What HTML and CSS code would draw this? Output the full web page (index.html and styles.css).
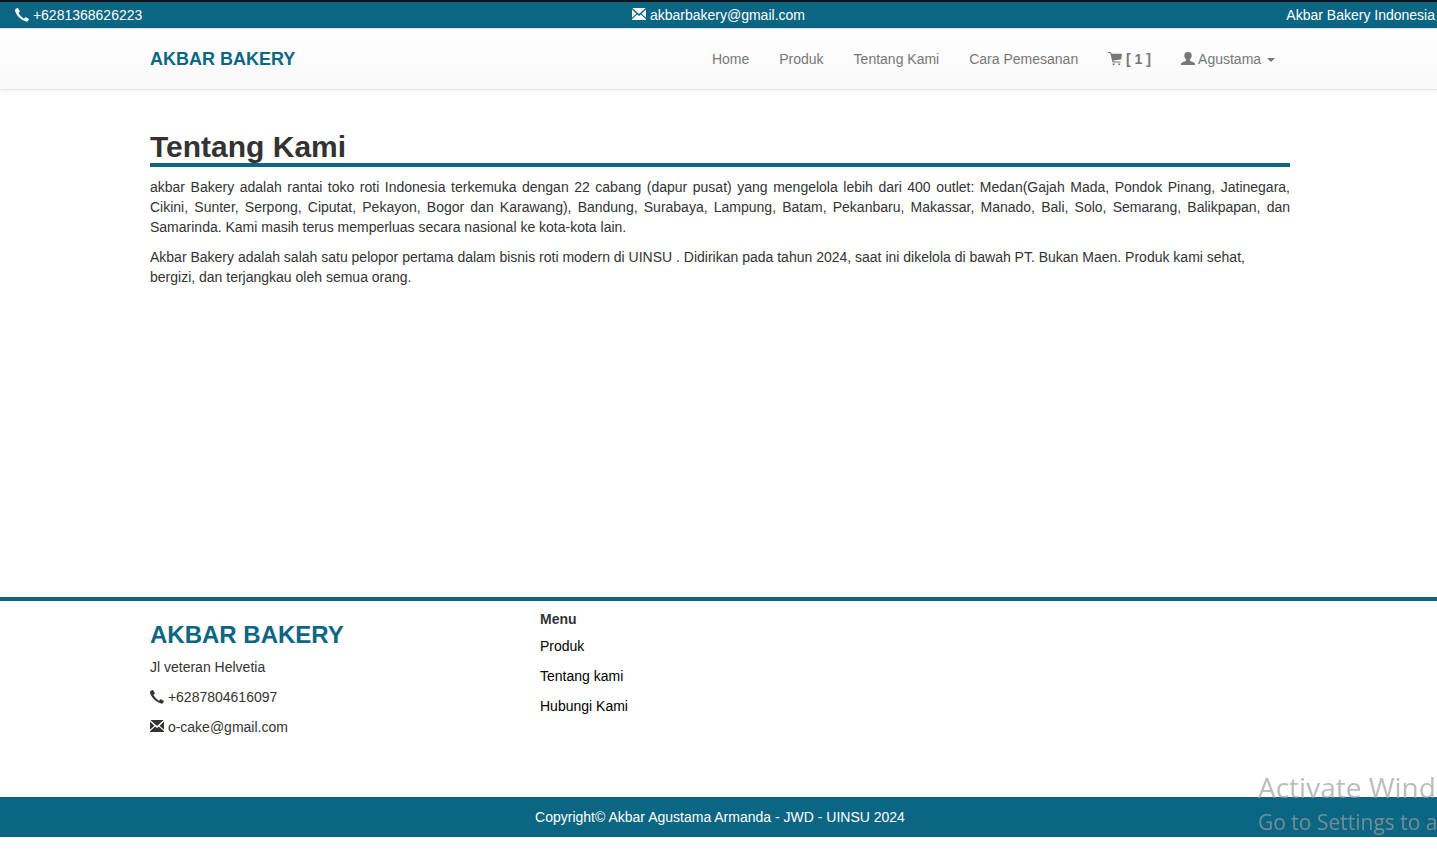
FILE: index.html
```html
<!DOCTYPE html>
<html lang="id">
<head>
<meta charset="utf-8">
<meta name="viewport" content="width=device-width, initial-scale=1">
<title>Akbar Bakery - Tentang Kami</title>
<link rel="stylesheet" href="styles.css">
</head>
<body>
<svg class="sprite" aria-hidden="true">
  <symbol id="phone" viewBox="0 0 14 14"><path d="M0.600 1 2.200 0.100Q2.900 -0.200 3.300 0.400L4.700 3Q5 3.500 4.500 3.900L3.700 4.600Q3.300 5 3.700 5.600Q5.600 8.700 8.500 10.500Q9 10.800 9.300 10.400L10 9.500Q10.400 9.100 10.900 9.300L13.600 10.700Q14.100 11.100 13.800 11.600L12.900 13.100Q12.500 13.700 11.800 13.700Q8.200 13.300 4.200 9.500Q0.200 5.400 0 2.300Q0 1.400 0.600 1Z"/></symbol>
  <symbol id="mail" viewBox="0 0 14 14"><path d="M0.300 0H13.700L7 6ZM0 1.600 4.400 5.700 0 9.700ZM14 1.600V9.700L9.600 5.700ZM5.200 6.500 7 8.100 8.800 6.500 14 11.300V12H0V11.300Z"/></symbol>
  <symbol id="cart" viewBox="0 0 14 14"><path d="M0.400 0H2.400Q2.900 0 3.050 0.400L3.700 1.700H13.500Q14 1.700 13.950 2.200L13.200 7Q13.100 7.500 12.600 7.600L5.300 8.600L5.600 9.600H12.200Q12.700 9.600 12.700 10.100T12.200 10.600H5Q4.600 10.600 4.500 10.200L2.200 1H0.400Q0 1 0 0.500T0.400 0ZM4.600 11.500H6.600V12.300A1 1 0 0 1 4.600 12.300ZM10.200 11.500H12.200V12.300A1 1 0 0 1 10.200 12.300Z"/></symbol>
  <symbol id="user" viewBox="0 0 14 14"><path d="M7 0C9.600 0 10.700 1.200 10.700 3.300C10.700 5.300 9.900 6.800 8.900 7.600C8.700 8.500 9 8.900 9.800 9.200L13 10.500Q14 11 14 12V13H0V12Q0 11 1 10.500L4.200 9.200C5 8.900 5.300 8.500 5.100 7.600C4.100 6.800 3.300 5.300 3.300 3.300C3.300 1.200 4.400 0 7 0Z"/></symbol>
</svg>

<div class="topbar">
  <span class="topbar-start"><svg class="icon" aria-hidden="true"><use href="#phone"/></svg> +6281368626223</span>
  <span><svg class="icon" aria-hidden="true"><use href="#mail"/></svg> akbarbakery@gmail.com</span>
  <span class="topbar-end">Akbar Bakery Indonesia</span>
</div>

<header class="navbar">
  <div class="container navbar-inner">
    <a class="brand" href="#">AKBAR BAKERY</a>
    <nav class="nav">
      <a href="#">Home</a>
      <a href="#">Produk</a>
      <a href="#">Tentang Kami</a>
      <a href="#">Cara Pemesanan</a>
      <a href="#"><svg class="icon" aria-hidden="true"><use href="#cart"/></svg> <b>[ 1 ]</b></a>
      <button type="button"><svg class="icon" aria-hidden="true"><use href="#user"/></svg> Agustama <span class="caret"></span></button>
    </nav>
  </div>
</header>

<main>
  <div class="container">
    <h2>Tentang Kami</h2>
    <p class="justified">akbar Bakery adalah rantai toko roti Indonesia terkemuka dengan 22 cabang (dapur pusat) yang mengelola lebih dari 400 outlet: Medan(Gajah Mada, Pondok Pinang, Jatinegara, Cikini, Sunter, Serpong, Ciputat, Pekayon, Bogor dan Karawang), Bandung, Surabaya, Lampung, Batam, Pekanbaru, Makassar, Manado, Bali, Solo, Semarang, Balikpapan, dan Samarinda. Kami masih terus memperluas secara nasional ke kota-kota lain.</p>
    <p>Akbar Bakery adalah salah satu pelopor pertama dalam bisnis roti modern di UINSU . Didirikan pada tahun 2024, saat ini dikelola di bawah PT. Bukan Maen. Produk kami sehat, bergizi, dan terjangkau oleh semua orang.</p>
  </div>
</main>

<footer>
  <div class="footer-main">
    <div class="container footer-columns">
      <section>
        <h3>AKBAR BAKERY</h3>
        <p>Jl veteran Helvetia</p>
        <p><svg class="icon" aria-hidden="true"><use href="#phone"/></svg> +6287804616097</p>
        <p><svg class="icon" aria-hidden="true"><use href="#mail"/></svg> o-cake@gmail.com</p>
      </section>
      <section>
        <h5>Menu</h5>
        <p><a href="#">Produk</a></p>
        <p><a href="#">Tentang kami</a></p>
        <p><a href="#">Hubungi Kami</a></p>
      </section>
    </div>
  </div>
  <div class="copyright">Copyright© Akbar Agustama Armanda - JWD - UINSU 2024</div>
</footer>

<aside class="activation">
  <div class="activation-title">Activate Wind</div>
  <div>Go to Settings to a</div>
</aside>
</body>
</html>
```
FILE: styles.css
```css
* { box-sizing: border-box; }

body {
  --teal: #0b6683;
  display: flex;
  flex-direction: column;
  min-height: 100vh;
  margin: 0;
  padding-bottom: 23px;
  background: #fff;
  color: #333;
  font: 14px/20px "Liberation Sans", Arial, sans-serif;
}

a { color: inherit; text-decoration: none; }
p { margin: 0 0 10px; }

.sprite { position: absolute; width: 0; height: 0; }

.icon {
  display: inline-block;
  width: 14px;
  height: 14px;
  fill: currentColor;
  vertical-align: -2px;
}

.container {
  width: 100%;
  max-width: 1170px;
  margin: 0 auto;
  padding: 0 15px;
}

.topbar {
  display: grid;
  grid-template-columns: 1fr auto 1fr;
  padding: 3px 2px;
  border-top: 2px solid #10151c;
  background: var(--teal);
  color: #fff;
}
.topbar-start { padding-left: 13px; }
.topbar-end { text-align: right; }

.navbar {
  padding-left: 3px;
  border: solid #e7e7e7;
  border-width: 1px 0;
  background: linear-gradient(#fff, #f8f8f8);
  box-shadow: 0 1px 5px rgba(0, 0, 0, .075);
}
.navbar-inner {
  display: flex;
  align-items: center;
  justify-content: space-between;
}
.brand {
  color: var(--teal);
  font-size: 18px;
  font-weight: bold;
}
.nav {
  display: flex;
  color: #777;
}
.nav a,
.nav button {
  padding: 20px 15px;
  border: 0;
  background: none;
  color: inherit;
  font: inherit;
}
.caret {
  display: inline-block;
  margin-left: 2px;
  border: 4px solid transparent;
  border-top-color: currentColor;
  border-bottom: 0;
  vertical-align: middle;
}

main {
  flex: 1;
  padding: 40px 0 20px 3px;
}
h2 {
  margin: 0 0 10px;
  border-bottom: 4px solid var(--teal);
  font-size: 30px;
  line-height: 33px;
}
.justified { text-align: justify; }

.footer-main {
  padding: 0 0 50px 3px;
  border-top: 4px solid var(--teal);
}
.footer-columns {
  display: grid;
  grid-template-columns: repeat(3, 1fr);
  gap: 30px;
}
h3 {
  margin: 20px 0 8px;
  color: var(--teal);
  font-size: 24px;
  line-height: 28px;
}
h5 {
  margin: 10px 0 8px;
  font-size: 14px;
  line-height: 17px;
}
.footer-columns a { color: #000; }

.copyright {
  padding: 10px 0 10px 3px;
  background: var(--teal);
  color: #fff;
  text-align: center;
}

/* Notice drawn over the lower right corner */
.activation {
  position: fixed;
  right: 0;
  bottom: 22px;
  width: 179px;
  overflow: hidden;
  color: rgba(160, 160, 160, .7);
  font: 21px/32px "Open Sans", "Segoe UI", sans-serif;
  white-space: nowrap;
  pointer-events: none;
}
.activation-title {
  font-size: 28px;
  line-height: 38px;
}
```
